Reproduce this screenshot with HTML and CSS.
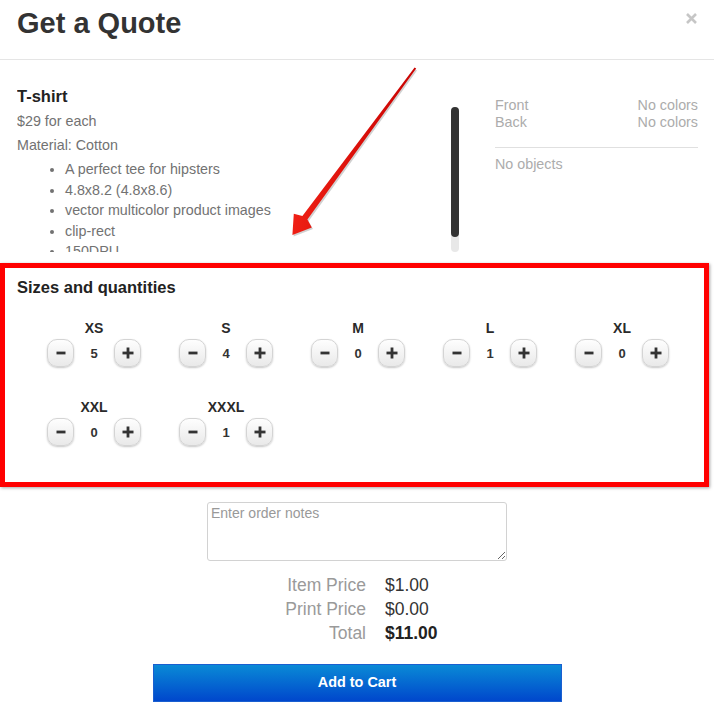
FILE: index.html
```html
<!DOCTYPE html>
<html lang="en">
<head>
<meta charset="utf-8">
<title>Get a Quote</title>
<link rel="stylesheet" href="styles.css">
</head>
<body>
<div class="modal">
  <header class="modal-header">
    <h2 class="title">Get a Quote</h2>
    <span class="close" aria-label="Close">
      <svg viewBox="0 0 11 11" width="11" height="11"><path d="M1 1 L10 10 M10 1 L1 10" stroke="#c6c6c6" stroke-width="2.6" stroke-linecap="butt"/></svg>
    </span>
  </header>

  <div class="top">
    <div class="info">
      <h4 class="product">T-shirt</h4>
      <p class="meta">$29 for each</p>
      <p class="meta">Material: Cotton</p>
      <ul class="features">
        <li>A perfect tee for hipsters</li>
        <li>4.8x8.2 (4.8x8.6)</li>
        <li>vector multicolor product images</li>
        <li>clip-rect</li>
        <li>150DPU</li>
      </ul>
    </div>
    <div class="scrollbar"><div class="thumb"></div></div>
    <div class="summary">
      <div class="srow"><span>Front</span><span>No colors</span></div>
      <div class="srow"><span>Back</span><span>No colors</span></div>
      <div class="divider"></div>
      <div class="srow"><span>No objects</span></div>
    </div>
  </div>

  <section class="sizes">
    <h4 class="sizes-title">Sizes and quantities</h4>
    <div class="size-grid">
      <div class="size"><div class="size-label">XS</div><div class="ctrl"><span class="qbtn"><svg viewBox="0 0 12 12" width="12" height="12"><rect x="1.5" y="4.6" width="9" height="2.8" fill="#333"/></svg></span><span class="qty">5</span><span class="qbtn"><svg viewBox="0 0 12 12" width="12" height="12"><rect x="0.5" y="4.6" width="11" height="2.8" fill="#333"/><rect x="4.6" y="0.5" width="2.8" height="11" fill="#333"/></svg></span></div></div>
      <div class="size"><div class="size-label">S</div><div class="ctrl"><span class="qbtn"><svg viewBox="0 0 12 12" width="12" height="12"><rect x="1.5" y="4.6" width="9" height="2.8" fill="#333"/></svg></span><span class="qty">4</span><span class="qbtn"><svg viewBox="0 0 12 12" width="12" height="12"><rect x="0.5" y="4.6" width="11" height="2.8" fill="#333"/><rect x="4.6" y="0.5" width="2.8" height="11" fill="#333"/></svg></span></div></div>
      <div class="size"><div class="size-label">M</div><div class="ctrl"><span class="qbtn"><svg viewBox="0 0 12 12" width="12" height="12"><rect x="1.5" y="4.6" width="9" height="2.8" fill="#333"/></svg></span><span class="qty">0</span><span class="qbtn"><svg viewBox="0 0 12 12" width="12" height="12"><rect x="0.5" y="4.6" width="11" height="2.8" fill="#333"/><rect x="4.6" y="0.5" width="2.8" height="11" fill="#333"/></svg></span></div></div>
      <div class="size"><div class="size-label">L</div><div class="ctrl"><span class="qbtn"><svg viewBox="0 0 12 12" width="12" height="12"><rect x="1.5" y="4.6" width="9" height="2.8" fill="#333"/></svg></span><span class="qty">1</span><span class="qbtn"><svg viewBox="0 0 12 12" width="12" height="12"><rect x="0.5" y="4.6" width="11" height="2.8" fill="#333"/><rect x="4.6" y="0.5" width="2.8" height="11" fill="#333"/></svg></span></div></div>
      <div class="size"><div class="size-label">XL</div><div class="ctrl"><span class="qbtn"><svg viewBox="0 0 12 12" width="12" height="12"><rect x="1.5" y="4.6" width="9" height="2.8" fill="#333"/></svg></span><span class="qty">0</span><span class="qbtn"><svg viewBox="0 0 12 12" width="12" height="12"><rect x="0.5" y="4.6" width="11" height="2.8" fill="#333"/><rect x="4.6" y="0.5" width="2.8" height="11" fill="#333"/></svg></span></div></div>
      <div class="size"><div class="size-label">XXL</div><div class="ctrl"><span class="qbtn"><svg viewBox="0 0 12 12" width="12" height="12"><rect x="1.5" y="4.6" width="9" height="2.8" fill="#333"/></svg></span><span class="qty">0</span><span class="qbtn"><svg viewBox="0 0 12 12" width="12" height="12"><rect x="0.5" y="4.6" width="11" height="2.8" fill="#333"/><rect x="4.6" y="0.5" width="2.8" height="11" fill="#333"/></svg></span></div></div>
      <div class="size"><div class="size-label">XXXL</div><div class="ctrl"><span class="qbtn"><svg viewBox="0 0 12 12" width="12" height="12"><rect x="1.5" y="4.6" width="9" height="2.8" fill="#333"/></svg></span><span class="qty">1</span><span class="qbtn"><svg viewBox="0 0 12 12" width="12" height="12"><rect x="0.5" y="4.6" width="11" height="2.8" fill="#333"/><rect x="4.6" y="0.5" width="2.8" height="11" fill="#333"/></svg></span></div></div>
    </div>
  </section>

  <textarea class="notes" placeholder="Enter order notes"></textarea>

  <div class="prices">
    <span class="plabel">Item Price</span><span class="pval">$1.00</span>
    <span class="plabel">Print Price</span><span class="pval">$0.00</span>
    <span class="plabel">Total</span><span class="pval total">$11.00</span>
  </div>

  <button class="cart">Add to Cart</button>
</div>

<svg class="arrow" viewBox="0 0 714 726" width="714" height="726" aria-hidden="true">
  <defs>
    <linearGradient id="ag" x1="0" y1="0" x2="1" y2="0.3">
      <stop offset="0" stop-color="#ff2b1c"/>
      <stop offset="1" stop-color="#c40000"/>
    </linearGradient>
  </defs>
  <polygon points="415.6,69.6 303.8,217.6 295,215.5 293.6,236.4 313,229 308.6,221.2 417,70.6" fill="rgba(0,0,0,0.18)"/>
  <polygon points="414.6,67.6 302.4,216 293.8,213.8 292.4,235 311.8,227.6 307.4,219.6 416.2,68.6" fill="url(#ag)"/>
</svg>
</body>
</html>
```

FILE: styles.css
```css
* { box-sizing: border-box; }

html, body {
  margin: 0;
  padding: 0;
  background: #fff;
}

body {
  position: relative;
  width: 714px;
  height: 726px;
  overflow: hidden;
  font-family: "Liberation Sans", Arial, Helvetica, sans-serif;
  color: #333;
}

.modal {
  width: 714px;
}

.modal-header {
  display: flex;
  justify-content: space-between;
  align-items: flex-start;
  height: 60px;
  padding: 7px 17px 0 17px;
  border-bottom: 1px solid #e5e5e5;
}

.title {
  margin: 0;
  font-size: 29px;
  line-height: 32px;
  font-weight: bold;
  color: #333;
}

.close {
  display: block;
  width: 11px;
  height: 11px;
  margin-top: 6px;
}

.close svg { display: block; }

.top {
  display: flex;
  align-items: flex-start;
  padding: 26px 16px 0 17px;
}

.info {
  width: 425px;
  height: 166px;
  overflow: hidden;
}

.product {
  margin: 0 0 5px;
  font-size: 16.5px;
  line-height: 20px;
  font-weight: bold;
  color: #222;
}

.meta {
  margin: 0 0 4px;
  font-size: 14.3px;
  line-height: 20px;
  color: #727272;
}

.features {
  margin: 0;
  padding-left: 48px;
  font-size: 14.3px;
  line-height: 20.5px;
  color: #727272;
}

.scrollbar {
  width: 8px;
  height: 145px;
  margin-left: 9px;
  margin-top: 21px;
  border-radius: 4px;
  background: #e8e8e8;
}

.thumb {
  height: 130px;
  border-radius: 4px;
  background: #333;
}

.summary {
  width: 203px;
  margin-left: 36px;
  margin-top: 10.5px;
  font-size: 14.3px;
  line-height: 17px;
  color: #acacac;
}

.srow {
  display: flex;
  justify-content: space-between;
}

.divider {
  height: 1px;
  background: #e0e0e0;
  margin: 16px 0 8px;
}

.sizes {
  width: 709px;
  margin-top: 11px;
  padding: 9px 12px 36px;
  border: 5px solid #ff0000;
  box-shadow: 1px 1px 3px rgba(0, 0, 0, 0.35);
}

.sizes-title {
  margin: 0;
  font-size: 16.5px;
  line-height: 20px;
  font-weight: bold;
  color: #222;
}

.size-grid {
  display: flex;
  flex-wrap: wrap;
  column-gap: 38px;
  row-gap: 32px;
  margin-top: 23px;
  padding-left: 30px;
}

.size {
  width: 94px;
}

.size-label {
  text-align: center;
  font-size: 14px;
  line-height: 16px;
  font-weight: bold;
  color: #2a2a2a;
}

.ctrl {
  display: flex;
  align-items: center;
  margin-top: 3px;
  height: 28px;
}

.qbtn {
  display: flex;
  align-items: center;
  justify-content: center;
  width: 27px;
  height: 28px;
  border-radius: 10px;
  border: 1px solid #d4d4d4;
  background: linear-gradient(#fefefe, #e9e9e9);
  box-shadow: 0 1px 2px rgba(0, 0, 0, 0.22);
}

.qbtn svg { display: block; }

.qty {
  width: 40px;
  text-align: center;
  font-size: 13px;
  font-weight: bold;
  color: #333;
}

.notes {
  display: block;
  width: 300px;
  height: 59px;
  margin: 15px auto 0;
  padding: 2px 3px;
  border: 1px solid #d2d2d2;
  border-radius: 3px;
  font-family: "Liberation Sans", Arial, sans-serif;
  font-size: 14px;
  line-height: 16px;
  color: #333;
  resize: both;
}

.notes::placeholder {
  color: #999;
}

.prices {
  display: grid;
  grid-template-columns: 366px 1fr;
  column-gap: 19px;
  margin-top: 12px;
  font-size: 17.5px;
  line-height: 24px;
}

.plabel {
  text-align: right;
  color: #9a9a9a;
}

.pval {
  color: #333;
}

.pval.total {
  font-weight: bold;
  color: #222;
}

.cart {
  display: block;
  width: 409px;
  height: 38px;
  margin: 19px auto 0;
  padding: 0 0 3px;
  border: 1px solid #1a5fd0;
  border-radius: 0;
  background: linear-gradient(#0a8ad6, #0047cc);
  color: #fff;
  font-family: "Liberation Sans", Arial, sans-serif;
  font-size: 14.4px;
  font-weight: bold;
  cursor: pointer;
}

.arrow {
  position: absolute;
  left: 0;
  top: 0;
  pointer-events: none;
}
```
